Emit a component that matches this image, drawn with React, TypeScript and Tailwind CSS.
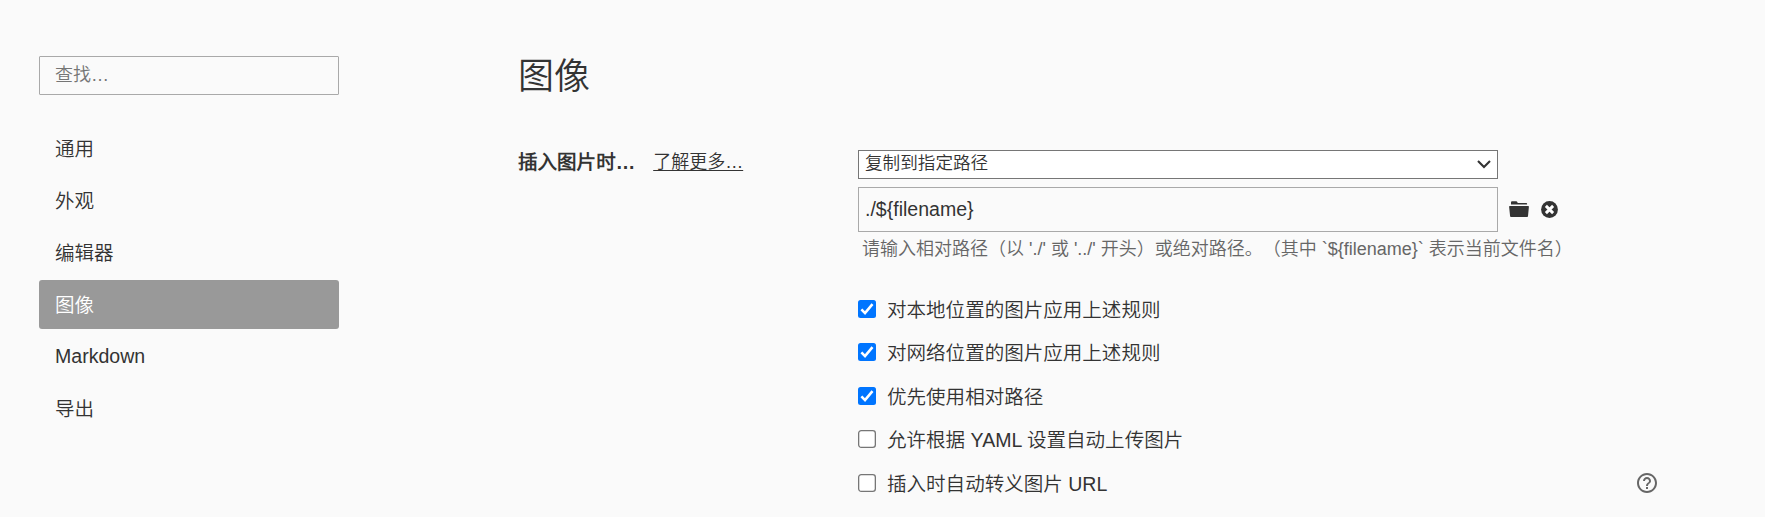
import React from 'react';

const nav = ['通用', '外观', '编辑器', '图像', 'Markdown', '导出'];
const options = [
  { label: '对本地位置的图片应用上述规则', on: true },
  { label: '对网络位置的图片应用上述规则', on: true },
  { label: '优先使用相对路径', on: true },
  { label: '允许根据 YAML 设置自动上传图片', on: false },
  { label: '插入时自动转义图片 URL', on: false, help: true },
];

function navClass(name: string) {
  if (name === '图像') return 'flex h-[49px] items-center rounded-[3px] bg-[#999] px-4 pt-[3px] text-white';
  if (name === 'Markdown') return 'flex h-[49px] items-center px-4 pt-px';
  return 'flex h-[49px] items-center px-4 pt-[3px]';
}

function Checkbox({ on }: { on: boolean }) {
  return (
    <svg role="checkbox" aria-checked={on} width="18" height="18" viewBox="0 0 18 18" className="shrink-0">
      {on ? (
        <>
          <rect width="18" height="18" rx="2.5" fill="#0075ff" />
          <path d="M3.4 9.4l3.6 3.7 7.5-9" fill="none" stroke="#fff" strokeWidth="2.6" />
        </>
      ) : (
        <rect x="0.65" y="0.65" width="16.7" height="16.7" rx="2.6" fill="#fff" stroke="#767676" strokeWidth="1.3" />
      )}
    </svg>
  );
}

function FolderIcon() {
  return (
    <svg width="20" height="16" viewBox="0 0 20 16" fill="#333">
      <path d="M2 3.6V1.2Q2 .3 3 .3h4.2q.8 0 1.1.7l.4.9h8.6q.8 0 .8.8v.9z" />
      <path d="M.8 5h18.4q.8 0 .7.8l-.9 9.4q-.1.8-.9.8H2q-.8 0-.9-.8L.1 5.8Q0 5 .8 5z" />
    </svg>
  );
}

function ClearIcon() {
  return (
    <svg width="17" height="17" viewBox="0 0 17 17">
      <circle cx="8.5" cy="8.5" r="8.4" fill="#333" />
      <path d="M4.9 4.9l7.2 7.2M12.1 4.9l-7.2 7.2" stroke="#fff" strokeWidth="2.9" />
    </svg>
  );
}

function HelpIcon() {
  return (
    <svg width="20" height="20" viewBox="2 2 20 20" fill="#666">
      <path d="M11 18h2v-2h-2v2zm1-16C6.480 2 2 6.480 2 12s4.480 10 10 10 10-4.480 10-10S17.520 2 12 2zm0 18c-4.410 0-8-3.590-8-8s3.590-8 8-8 8 3.590 8 8-3.590 8-8 8zm0-14c-2.210 0-4 1.790-4 4h2c0-1.100.9-2 2-2s2 .9 2 2c0 2-3 1.750-3 5h2c0-2.250 3-2.500 3-5 0-2.210-1.790-4-4-4z" />
    </svg>
  );
}

export default function App() {
  return (
    <div className="flex h-[517px] w-[1765px] overflow-hidden bg-[#fafafa] font-['Liberation_Sans','Noto_Sans_CJK_SC_DemiLight','Noto_Sans_CJK_SC',sans-serif] text-[19.55px] font-[350] text-[#333]">
      <aside className="ml-[39px] w-[300px] shrink-0 pt-[56px]">
        <input placeholder="查找…" className="block h-[39px] w-full rounded-[1px] border border-[#a9a9a9] bg-transparent px-[15px] text-[18px] placeholder:text-[#757575]" />
        <nav className="mt-[29px] flex flex-col gap-[3px]">
          {nav.map((n) => (
            <div key={n} className={navClass(n)}>{n}</div>
          ))}
        </nav>
      </aside>
      <main className="ml-[179px] w-[1139px] shrink-0 pt-[49px]">
        <h1 className="h-[56px] text-[36px] font-[350] leading-[56px]">图像</h1>
        <div className="mt-[45px] flex">
          <div className="flex h-[25px] w-[340px] items-center gap-[18px]">
            <b className="whitespace-nowrap font-bold">插入图片时…</b>
            <a className="text-[18px] underline underline-offset-2">了解更多…</a>
          </div>
          <div className="flex-1">
            <div className="flex h-[29px] w-[640px] items-center justify-between border border-[#767676] bg-white pl-[6px] pr-[6px] text-[17.6px]">
              <span className="pb-[2px]">复制到指定路径</span>
              <svg width="14" height="9" viewBox="0 0 14 9" fill="none" stroke="#333" strokeWidth="2.1"><path d="M1 1l6 6 6-6" /></svg>
            </div>
            <div className="mt-[8px] flex items-center">
              <div className="flex h-[45px] w-[640px] items-center border border-[#a9a9a9] px-[6px] pt-px">./$&#123;filename&#125;</div>
              <div className="ml-[11px] flex items-center gap-[12px] pb-px"><FolderIcon /><ClearIcon /></div>
            </div>
            <p className="ml-[4px] mt-[4px] h-[26px] whitespace-nowrap text-[18px] leading-[26px] text-[#666] [text-spacing-trim:space-all]">请输入相对路径（以 './' 或 '../' 开头）或绝对路径。（其中 `$&#123;filename&#125;` 表示当前文件名）</p>
            <div className="mt-[25px] flex flex-col">
              {options.map((o) => (
                <div key={o.label} className="flex h-[43.5px] items-center">
                  <Checkbox on={o.on} />
                  <span className="ml-[11px] pt-[3px]">{o.label}</span>
                  {o.help && <span className="ml-auto"><HelpIcon /></span>}
                </div>
              ))}
            </div>
          </div>
        </div>
      </main>
    </div>
  );
}
